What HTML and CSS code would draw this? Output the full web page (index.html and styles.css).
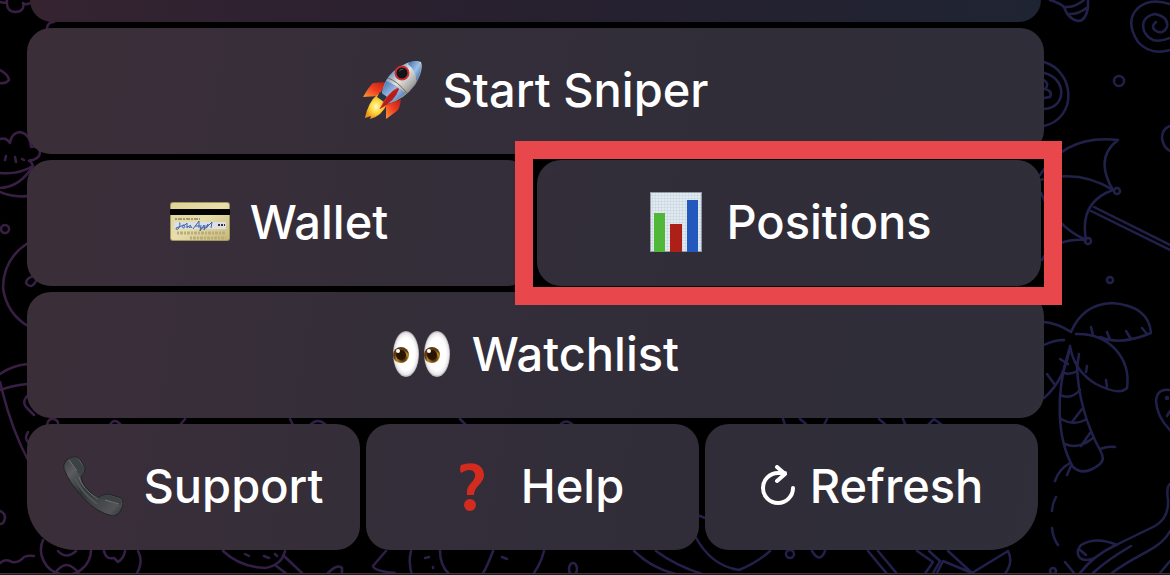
FILE: index.html
```html
<!DOCTYPE html>
<html lang="en">
<head>
    <meta charset="UTF-8">
    <meta name="viewport" content="width=device-width, initial-scale=1.0">
    <title>Sniper Bot</title>
    <link rel="stylesheet" href="styles.css">
</head>
<body>
    <!-- chat wallpaper -->
    <svg class="wallpaper" viewBox="0 0 1170 575" preserveAspectRatio="xMidYMid slice" aria-hidden="true">
        <defs>
            <linearGradient id="ink" gradientUnits="userSpaceOnUse" x1="0" y1="0" x2="1170" y2="0">
                <stop offset="0" stop-color="#3a1f45"/>
                <stop offset="0.4" stop-color="#2c1f48"/>
                <stop offset="0.7" stop-color="#221f4c"/>
                <stop offset="1" stop-color="#20214a"/>
            </linearGradient>
        </defs>
        <g fill="none" stroke="url(#ink)" stroke-width="2.5" stroke-linecap="round" stroke-linejoin="round">
            <!-- left side -->
            <path d="M0 2Q6 4 7 1M7 1Q6 12 16 12Q25 11 23 3Q26 6 32 2M47 28Q48 22 54 22"/>
            <path d="M0 70Q8 74 9 80Q6 84 0 83"/>
            <path d="M0 139Q6 137 10 143Q11 133 20 132Q30 134 31 147Q38 145 40 152Q40 159 29 161M30 160L33 166Q18 175 0 173M33 166Q20 187 0 188M0 192Q14 198 28 196M5 160L6 156M15 157L16 162M22 159L24 160"/>
            <circle cx="5" cy="229" r="4"/>
            <path d="M28 243Q3 259 3 288Q7 314 28 326M36 275Q26 278 26 283Q31 290 36 281"/>
            <path d="M0 374Q13 365 28 364M0 382L2 390Q12 430 28 460M0 390Q14 385 28 384M27 396Q22 402 26 407L34 415M28 432Q24 438 28 442M47 425Q48 418 54 419Q59 421 58 425"/>
            <path d="M0 511Q5 513 5 518Q4 524 0 524M0 563Q6 558 12 562Q19 563 24 557Q28 555 34 556"/>
            <!-- bottom strip -->
            <path d="M43 540A25 25 0 1 0 91 550M58 551Q66 560 76 551M54 575Q66 555 80 575M104 551Q106 560 114 558L118 562Q124 558 125 551M138 551Q144 562 136 575"/>
            <path d="M223 551Q240 567 265 568Q282 565 285 551M245 554L249 556M264 556L269 558M275 554L277 556M283 555L304 575M275 565L288 575M326 575Q337 563 342 568L342 575"/>
            <path d="M386 551Q378 560 373 566Q374 571 395 573M411 551Q408 562 412 575M440 551Q440 566 450 575M493 551Q488 565 482 575M544 551Q541 563 534 573M425 558L429 557M433 567L433 568M502 557L507 559"/>
            <ellipse cx="573" cy="569" rx="4" ry="6"/>
            <path d="M634 551Q654 570 680 575M656 551Q676 566 705 575M695 514L705 518M695 536Q711 566 739 570Q758 562 770 551"/>
            <path d="M812 551Q820 564 825 551M868 551L888 575M878 551L898 575M917 551L933 562L924 575M929 551L940 561L932 575M943 561L972 573M948 551L972 573L1008 551M943 561L936 575M1008 551Q1014 563 1004 575"/>
            <circle cx="790" cy="554" r="4"/>
            <!-- gaps between rows -->
            <path d="M110 425Q114 417 121 425M180 425L185 419M290 419L293 425M310 425Q318 417 326 425M460 419L466 425M560 425Q566 418 573 425M783 419L785 425M800 419L806 424M824 425L827 419M879 419L886 425M903 419L905 424M928 425L934 419L942 425"/>
            <!-- acorn and lollipop -->
            <path d="M1050 0Q1060 3 1064 7Q1068 19 1078 21Q1086 21 1088 7V0M1064 7Q1074 8 1084 0M1067 14Q1078 15 1088 7"/>
            <path d="M1170 50Q1151 56 1138 42Q1125 22 1137 9Q1149-3 1170 4M1170 38Q1151 46 1144 31Q1140 17 1155 14Q1169 17 1167 27Q1163 35 1156 31Q1150 27 1156 22"/>
            <circle cx="1119" cy="81" r="5"/>
            <path d="M1044 62C1075 71 1078 118 1044 126M1044 73C1067 78 1067 108 1044 109M1044 80Q1050 84 1045 89Q1053 91 1050 97L1044 98"/>
            <path d="M1170 126Q1162 129 1162 138Q1163 147 1170 151"/>
            <!-- umbrella -->
            <path d="M1040 175Q1066 134 1118 140Q1094 158 1113 190Q1079 202 1086 240Q1053 238 1042 260M1040 180Q1080 169 1113 190M1041 193Q1055 226 1086 240M1094 207L1170 245M1091 211L1170 250"/>
            <circle cx="1117" cy="191" r="3"/><circle cx="1088" cy="241" r="3"/>
            <circle cx="1110" cy="280" r="3"/>
            <!-- palm tree -->
            <path d="M1044 322Q1057 323 1071 332Q1083 304 1112 303Q1149 306 1151 333Q1120 346 1100 337M1076 334C1111 333 1131 360 1127 388Q1119 396 1096 384Q1074 371 1070 346Q1065 380 1044 398M1044 345Q1054 340 1064 340M1091 327L1093 335M1107 332L1110 340M1126 331L1131 339M1142 328L1147 334M1087 366L1086 372M1106 380L1107 387M1060 359L1068 364M1047 374L1055 385M1079 354L1077 367"/>
            <path d="M1069 350C1055 394 1057 439 1073 467Q1084 477 1100 464Q1105 459 1101 452Q1078 410 1077 364M1064 373Q1071 375 1077 371M1060 395Q1071 400 1080 390M1061 419Q1074 426 1085 420M1072 422L1082 409M1065 444Q1078 450 1093 438M1081 446L1090 433M1100 449Q1108 446 1115 447"/>
            <path d="M1070 463Q1059 469 1055 481M1071 466L1067 475M1056 497Q1052 504 1052 511M1052 528Q1053 538 1058 545M1065 562L1074 573"/>
            <circle cx="1053" cy="571" r="3"/>
            <path d="M1170 390Q1157 388 1156 401Q1157 417 1170 430M1170 411L1167 416"/>
            <circle cx="1167" cy="398" r="1"/>
            <path d="M1170 484Q1166 487 1168 500Q1169 518 1155 526L1116 545Q1094 555 1080 573M1117 545Q1096 536 1081 545Q1075 552 1080 558Q1085 562 1095 558M1080 550L1086 555M1131 546Q1107 560 1093 573M1112 573C1138 553 1160 550 1170 531M1160 573L1170 561"/>
        </g>
    </svg>

    <main class="keyboard">
        <div class="key-row row-top">
            <button class="key key-top" type="button" aria-label="Previous option"></button>
        </div>

        <div class="key-row">
            <button class="key" type="button">
                <svg class="emoji" viewBox="0 0 60 60" aria-hidden="true">
                    <defs>
                        <linearGradient id="rocketBody" x1="0.2" y1="0.2" x2="0.8" y2="0.8">
                            <stop offset="0" stop-color="#5c83b5"/>
                            <stop offset="0.4" stop-color="#e4e5e2"/>
                            <stop offset="0.7" stop-color="#b0b1ae"/>
                            <stop offset="1" stop-color="#65676b"/>
                        </linearGradient>
                        <linearGradient id="rocketBlue" x1="0" y1="0" x2="1" y2="1">
                            <stop offset="0" stop-color="#3f6dab"/>
                            <stop offset="0.5" stop-color="#9dc2e8"/>
                            <stop offset="1" stop-color="#234f93"/>
                        </linearGradient>
                        <linearGradient id="fin" x1="1" y1="0" x2="0" y2="1">
                            <stop offset="0" stop-color="#b61d14"/>
                            <stop offset="0.5" stop-color="#ee3e22"/>
                            <stop offset="1" stop-color="#f99b37"/>
                        </linearGradient>
                        <radialGradient id="flame">
                            <stop offset="0" stop-color="#fffbc0"/>
                            <stop offset="0.5" stop-color="#ffd83c"/>
                            <stop offset="1" stop-color="#ee951c"/>
                        </radialGradient>
                    </defs>
                    <path fill="url(#fin)" d="M24 22L11 23Q8 25 1 37L17 36Z"/>
                    <path fill="url(#fin)" d="M39 39Q38 48 35 51L24 59L24 45Z"/>
                    <path fill="url(#flame)" d="M16 34Q6 42 3 58L9 56L8 59Q20 56 25 44Z"/>
                    <path fill="url(#rocketBody)" d="M20 34Q22 13 45 3Q54 0 59 2Q62 10 53 25Q42 40 25 44Z"/>
                    <path fill="url(#rocketBlue)" d="M48 2Q61-1 59 9Q58 16 54 22Q55 12 46 4Z"/>
                    <path fill="url(#rocketBlue)" d="M24 21Q31 23 44 33Q35 41 25 44L20 35Q20 29 24 21Z"/>
                    <path fill="#24364a" d="M18 32L28 39L25 44L15 37Z"/>
                    <path fill="#b61c1c" d="M36 28Q26 32 18 49Q33 41 37 29Z"/>
                    <path fill="none" stroke="#df382b" stroke-width="1" d="M36 28Q26 32 18 49"/>
                    <circle cx="40" cy="13" r="7.5" fill="#c92f31"/>
                    <circle cx="40" cy="13" r="5.5" fill="#111416"/>
                    <path fill="#555c61" d="M37 12Q38 8 42 9Q38 10 37 12Z"/>
                    <path fill="none" stroke="#80663c" stroke-width="1" d="M26 18Q35 21 45 33"/>
                </svg>
                <span>Start Sniper</span>
            </button>
        </div>

        <div class="key-row row-two">
            <button class="key" type="button">
                <svg class="emoji" viewBox="0 0 60 60" aria-hidden="true">
                    <defs>
                        <linearGradient id="card" x1="0" y1="0" x2="1" y2="1">
                            <stop offset="0" stop-color="#dfd396"/>
                            <stop offset="0.5" stop-color="#e7deac"/>
                            <stop offset="1" stop-color="#c8b778"/>
                        </linearGradient>
                    </defs>
                    <rect x="0" y="10" width="60" height="39" rx="3" fill="#a29662"/>
                    <rect x="1" y="11" width="58" height="37" rx="2" fill="url(#card)"/>
                    <rect x="0" y="17" width="60" height="6" fill="#050505"/>
                    <path stroke="#5e5940" stroke-width="1" stroke-dasharray="2 1 4 1" d="M5 27H30"/>
                    <rect x="4" y="30" width="52" height="7" fill="#dce0e4"/>
                    <path fill="none" stroke="#4165ac" stroke-width="1" d="M9 31Q11 30 9 36Q6 39 6 36L14 33Q16 36 13 36Q11 33 15 33L17 31V36L18 34L20 36V33L22 36M23 37L29 29V36M25 34H30M31 33L30 39L34 33Q34 37 31 36M35 33L34 38L38 32Q38 36 36 36L42 30L41 36"/>
                    <path stroke="#333" stroke-width="2" stroke-dasharray="2 1" d="M48 33H55"/>
                    <path stroke="#b9ad7b" stroke-width="3" stroke-dasharray="2 1 3 1" d="M7 41H56M20 46H56"/>
                </svg>
                <span>Wallet</span>
            </button>
            <div class="highlight">
                <button class="key" type="button">
                    <svg class="emoji" viewBox="0 0 60 60" aria-hidden="true">
                        <defs>
                            <pattern id="graph" width="3" height="3" patternUnits="userSpaceOnUse">
                                <rect width="3" height="3" fill="#e2eaf0"/>
                                <path d="M0 0H3M0 0V3" stroke="#c3d3df" stroke-width="1"/>
                            </pattern>
                        </defs>
                        <rect x="4" y="0" width="52" height="60" fill="#929ba3"/>
                        <rect x="5" y="1" width="50" height="58" fill="url(#graph)"/>
                        <rect x="8" y="21" width="11" height="39" fill="#50b738"/>
                        <rect x="24" y="32" width="12" height="28" fill="#ad2018"/>
                        <rect x="41" y="8" width="11" height="52" fill="#2358bd"/>
                    </svg>
                    <span>Positions</span>
                </button>
            </div>
        </div>

        <div class="key-row">
            <button class="key" type="button">
                <svg class="emoji" viewBox="0 0 60 60" aria-hidden="true">
                    <defs>
                        <radialGradient id="eyeball">
                            <stop offset="0.7" stop-color="#fff"/>
                            <stop offset="0.9" stop-color="#e8e6e9"/>
                            <stop offset="1" stop-color="#aaa6ad"/>
                        </radialGradient>
                        <radialGradient id="iris" cx="0.6" cy="0.7">
                            <stop offset="0.3" stop-color="#50300a"/>
                            <stop offset="0.75" stop-color="#bd8a22"/>
                            <stop offset="1" stop-color="#5f3a10"/>
                        </radialGradient>
                    </defs>
                    <ellipse cx="14" cy="30" rx="13" ry="23" fill="url(#eyeball)"/>
                    <ellipse cx="45" cy="30" rx="13" ry="23" fill="url(#eyeball)"/>
                    <circle cx="9" cy="31" r="8" fill="url(#iris)"/>
                    <circle cx="40" cy="31" r="8" fill="url(#iris)"/>
                    <circle cx="9" cy="31" r="5" fill="#281400"/>
                    <circle cx="40" cy="31" r="5" fill="#281400"/>
                    <circle cx="6" cy="27" r="2" fill="#fff"/>
                    <circle cx="37" cy="27" r="2" fill="#fff"/>
                </svg>
                <span>Watchlist</span>
            </button>
        </div>

        <div class="key-row row-three">
            <button class="key" type="button">
                <svg class="emoji" viewBox="0 0 60 60" aria-hidden="true">
                    <defs>
                        <linearGradient id="phone" x1="0" y1="0" x2="1" y2="1">
                            <stop offset="0" stop-color="#3a3c3e"/>
                            <stop offset="0.2" stop-color="#5a5c5d"/>
                            <stop offset="0.45" stop-color="#303538"/>
                            <stop offset="0.85" stop-color="#525455"/>
                            <stop offset="1" stop-color="#303132"/>
                        </linearGradient>
                    </defs>
                    <path fill="url(#phone)" stroke="#202326" stroke-width="1" d="M2 6Q6 0 14 1Q18 3 22 12Q23 16 18 20Q18 30 34 42Q40 38 46 38L58 42Q62 47 58 54Q55 60 49 60Q34 56 22 44Q6 27 1 13Q0 9 2 6Z"/>
                    <path fill="#3c4144" d="M6 3Q11 0 15 3L21 12Q22 16 17 19L14 16Z"/>
                    <path fill="#3c4144" d="M36 42Q41 38 46 39L57 43Q60 46 57 49L43 44Z"/>
                    <path fill="none" stroke="#6d7274" stroke-width="1" d="M6 4L14 15M16 21Q19 33 35 43M42 44L56 48"/>
                    <path fill="none" stroke="#505557" stroke-width="2" d="M12 22Q19 37 34 48"/>
                </svg>
                <span>Support</span>
            </button>
            <button class="key" type="button">
                <svg class="emoji" viewBox="0 0 60 60" aria-hidden="true">
                    <path fill="#d32b1e" d="M20 9Q28 6 35 8Q43 11 43 19Q43 24 37 30Q33 34 33 39H26Q25 32 30 27Q35 22 34 18Q33 14 28 14Q25 14 20 17Q18 13 20 9Z"/>
                    <circle cx="29" cy="49" r="6" fill="#d32b1e"/>
                </svg>
                <span>Help</span>
            </button>
            <button class="key key-refresh" type="button">
                <svg class="refresh-icon" viewBox="0 0 36 42" aria-hidden="true">
                    <path fill="none" stroke="#fff" stroke-width="4" stroke-linecap="round" stroke-linejoin="round" d="M33 23A15 15 0 1 1 18 8H25M17 2L25 9L17 16"/>
                </svg>
                <span>Refresh</span>
            </button>
        </div>
    </main>
    <footer class="input-edge"></footer>
</body>
</html>
```

FILE: styles.css
```css
* {
    margin: 0;
    padding: 0;
    box-sizing: border-box;
}

body {
    background-color: #000;
    min-height: 100vh;
    display: flex;
    flex-direction: column;
    justify-content: space-between;
    overflow: hidden;
    font-family: Inter, -apple-system, 'Liberation Sans', sans-serif;
}

.wallpaper {
    position: absolute;
    inset: 0;
    width: 100%;
    height: 100%;
    z-index: -1;
}

/* inline keyboard */
.keyboard {
    display: flex;
    flex-direction: column;
    gap: 6px;
    padding: 0 126px 0 27px;
}

.key-row {
    display: grid;
    gap: 6px;
}

.row-top {
    padding: 0 3px;
}

.row-two {
    grid-template-columns: repeat(2, 1fr);
    padding-right: 3px;
}

.row-three {
    grid-template-columns: repeat(3, 1fr);
    padding-right: 6px;
}

.key {
    width: 100%;
    height: 126px;
    padding-bottom: 3px;
    border: none;
    border-radius: 24px;
    display: flex;
    justify-content: center;
    align-items: center;
    gap: 20px;
    color: #fff;
    font-family: inherit;
    font-size: 47px;
    font-weight: 500;
    line-height: 60px;
    white-space: nowrap;
    background: linear-gradient(100deg, #3b2e39 0%, #392e39 15%, #342e39 35%, #302d39 60%, #2f2e39 100%) fixed;
    cursor: pointer;
}

.key-top {
    height: 22px;
    border-radius: 0 0 22px 22px;
    background: linear-gradient(90deg, #352330, #27202f 50%, #1f2433);
}

.row-three .key:first-child {
    border-bottom-left-radius: 48px;
}

.row-three .key:last-child {
    border-bottom-right-radius: 48px;
}

.emoji {
    width: 60px;
    height: 60px;
    flex: none;
}

.key-refresh {
    gap: 14px;
}

.refresh-icon {
    width: 36px;
    height: 42px;
    flex: none;
}

/* red frame over the Positions key */
.highlight {
    position: relative;
}

.highlight::after {
    content: '';
    position: absolute;
    inset: -19px -21px -19px -22px;
    border: 18px solid #e8474b;
    z-index: 1;
    pointer-events: none;
}

.input-edge {
    height: 2px;
    background-color: #1c1c1e;
    border-top: 1px solid #3a393c;
}
```
